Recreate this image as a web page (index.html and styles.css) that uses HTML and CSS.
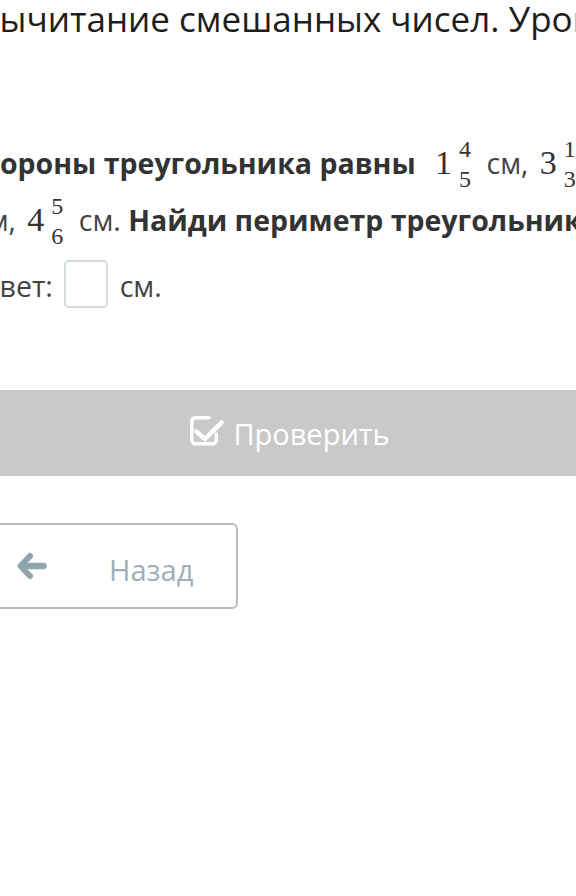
FILE: index.html
```html
<!DOCTYPE html>
<html lang="ru">
<head>
    <meta charset="UTF-8">
    <meta name="viewport" content="width=device-width, initial-scale=1.0">
    <title>Вычитание смешанных чисел</title>
    <link rel="stylesheet" href="styles.css">
</head>
<body>
<div class="page">
    <h1 class="title">Вычитание смешанных чисел. Урок 1</h1>

    <p class="question">
        <b>Стороны треугольника равны</b>
        <span class="math first"><span class="whole">1</span><span class="frac"><span>4</span><span>5</span></span></span>
        см,
        <span class="math"><span class="whole">3</span><span class="frac"><span>1</span><span>3</span></span></span>
        <br>
        см,
        <span class="math"><span class="whole">4</span><span class="frac"><span>5</span><span>6</span></span></span>
        см. <b>Найди периметр треугольника.</b>
    </p>

    <div class="answer">
        Ответ: <span class="answer-box"></span> см.
    </div>

    <button class="check-button">
        <svg class="check-icon" width="34" height="30" viewBox="0 0 34 30">
            <path d="M19 1.8 H6 Q1.8 1.8 1.8 6 V23.5 Q1.8 27.8 6 27.8 H22 Q26.3 27.8 26.3 23.5 V18" fill="none" stroke="#fff" stroke-width="3.4" stroke-linecap="round"/>
            <polyline points="6.5,15.5 15,23 31.5,6.5" fill="none" stroke="#fff" stroke-width="4.5" stroke-linecap="round" stroke-linejoin="round"/>
        </svg>
        Проверить
    </button>

    <button class="back-button">
        <svg class="back-icon" width="30" height="28" viewBox="0 0 30 28">
            <polyline points="13,4 3.5,14 13,24" fill="none" stroke="#90a4ae" stroke-width="6" stroke-linecap="round" stroke-linejoin="round"/>
            <line x1="5" y1="14" x2="26.5" y2="14" stroke="#90a4ae" stroke-width="6.5" stroke-linecap="round"/>
        </svg>
        <span>Назад</span>
    </button>
</div>
</body>
</html>
```

FILE: styles.css
```css
html, body {
    margin: 0;
    padding: 0;
    background: #fff;
    overflow: hidden;
}

body {
    width: 576px;
    height: 896px;
    font-family: "Open Sans", "Noto Sans", sans-serif;
}

.page {
    width: 640px;
    margin-left: -30px;
}

.title {
    margin: 0;
    padding-left: 7px;
    font-size: 35px;
    font-weight: normal;
    line-height: 37px;
    color: #1e1e1e;
    white-space: nowrap;
}

.question {
    margin: 100px 0 0 0;
    padding-left: 4px;
    text-indent: -8px;
    font-size: 28.5px;
    line-height: 53px;
    color: #444;
    white-space: nowrap;
}

.question b {
    color: #333;
    font-weight: bold;
}

.math {
    font-family: "Liberation Serif", "Times New Roman", serif;
    line-height: 1;
    color: #333;
    margin: 0 8px 0 4px;
}

.math.first {
    margin-left: 12px;
}

.whole {
    font-size: 34px;
}

.frac {
    display: inline-block;
    vertical-align: -13px;
    margin: -14px 0 0 7px;
    font-size: 24px;
    line-height: 30px;
    text-align: center;
    text-indent: 0;
}

.frac span {
    display: block;
}

.answer {
    margin: 9px 0 0 -6px;
    font-size: 28.5px;
    line-height: 48px;
    color: #444;
    white-space: nowrap;
}

.answer-box {
    display: inline-block;
    width: 40px;
    height: 44px;
    margin: 0 4px;
    border: 2px solid #d3dddf;
    border-radius: 5px;
    vertical-align: -11px;
}

.check-button {
    display: flex;
    align-items: center;
    justify-content: center;
    gap: 9px;
    width: 100%;
    height: 86px;
    margin-top: 80px;
    padding: 0;
    border: none;
    background: #c9c9c9;
    color: #fff;
    font-family: "Open Sans", "Noto Sans", sans-serif;
    font-size: 29px;
}

.check-icon {
    margin-top: -4px;
}

.back-button {
    display: flex;
    align-items: center;
    gap: 62px;
    width: 268px;
    height: 86px;
    margin-top: 47px;
    padding: 6px 0 0 45px;
    border: 2px solid #b5bec3;
    border-radius: 6px;
    background: #fff;
    color: #9eafb8;
    font-family: "Open Sans", "Noto Sans", sans-serif;
    font-size: 29px;
}

.back-icon {
    flex-shrink: 0;
    margin-top: -6px;
}
```
